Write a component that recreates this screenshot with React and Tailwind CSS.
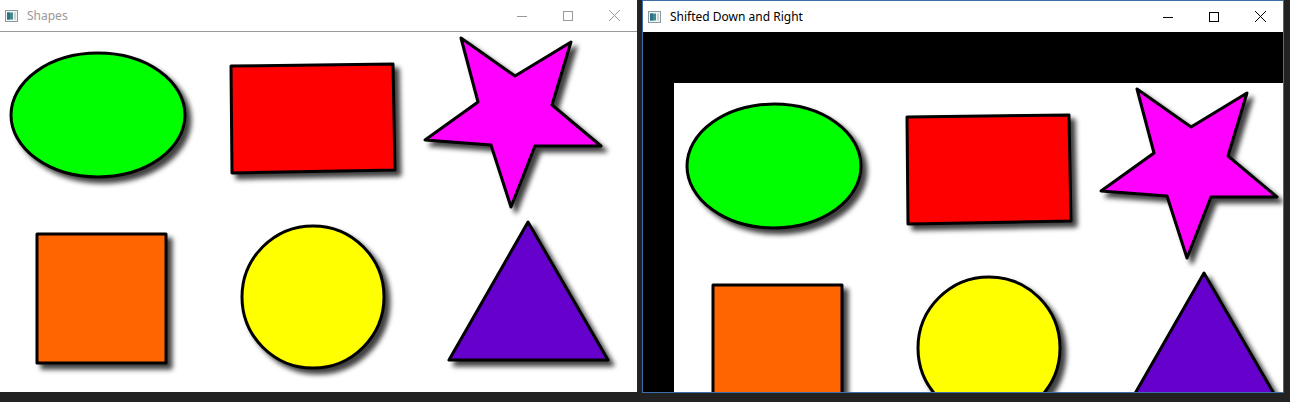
import { useId } from 'react';

const shapes = [
  { type: 'ellipse', props: { cx: 98, cy: 83, rx: 87, ry: 62 }, fill: '#00ff00' },
  { type: 'polygon', props: { points: '231,34 393,32 395,138 232,141' }, fill: '#ff0000' },
  {
    type: 'polygon',
    props: { points: '461,6 515,44 571,10 552,73 601,114 535,114 511,175 491,113 425,108 478,70' },
    fill: '#ff00ff',
  },
  { type: 'rect', props: { x: 37, y: 202, width: 129, height: 129 }, fill: '#ff6600' },
  { type: 'circle', props: { cx: 313, cy: 265, r: 71 }, fill: '#ffff00' },
  { type: 'polygon', props: { points: '528,190 449,328 608,328' }, fill: '#6600cc' },
];

const ShapesImage = () => {
  const id = useId().replace(/:/g, '');
  return (
    <svg width="640" height="360" viewBox="0 0 640 360" className="block bg-white">
      <defs>
        <filter id={`sh${id}`} x="-20%" y="-20%" width="140%" height="140%">
          <feDropShadow dx="5" dy="5" stdDeviation="2.5" floodColor="#000" floodOpacity="0.75" />
        </filter>
      </defs>
      <g filter={`url(#sh${id})`} stroke="#000" strokeWidth="3" strokeLinejoin="round">
        {shapes.map((s, i) => {
          const Tag = s.type;
          return <Tag key={i} {...s.props} fill={s.fill} />;
        })}
      </g>
    </svg>
  );
};

const AppIcon = () => (
  <svg width="13" height="12" viewBox="0 0 13 12">
    <rect x="0.5" y="0.5" width="12" height="11" fill="#f4f4f4" stroke="#8a9aa0" />
    <rect x="2" y="2.5" width="6" height="7" fill="#3f8f86" />
    <rect x="2" y="2.5" width="3" height="7" fill="#2f6f8f" />
    <rect x="9" y="2.5" width="2" height="7" fill="#c9d2d6" />
  </svg>
);

const Controls = ({ active }) => {
  const c = active ? '#000' : '#999';
  return (
    <div className="flex h-full items-center">
      <div className="flex h-full w-[46px] items-center justify-center">
        <svg width="10" height="10" viewBox="0 0 10 10">
          <line x1="0" y1="5.5" x2="10" y2="5.5" stroke={c} />
        </svg>
      </div>
      <div className="flex h-full w-[46px] items-center justify-center">
        <svg width="10" height="10" viewBox="0 0 10 10">
          <rect x="0.5" y="0.5" width="9" height="9" fill="none" stroke={c} />
        </svg>
      </div>
      <div className="flex h-full w-[46px] items-center justify-center">
        <svg width="11" height="11" viewBox="0 0 11 11">
          <path d="M0 0 L11 11 M11 0 L0 11" stroke={c} />
        </svg>
      </div>
    </div>
  );
};

const TitleBar = ({ title, active }) => (
  <div className="flex h-[31px] shrink-0 items-center justify-between bg-white">
    <div className="flex items-center gap-[9px] pl-[5px]">
      <AppIcon />
      <span
        className={`text-[12px] ${active ? 'text-black' : 'text-[#999]'}`}
        style={{ fontFamily: '"Noto Sans", "Open Sans", sans-serif' }}
      >
        {title}
      </span>
    </div>
    <Controls active={active} />
  </div>
);

export default function App() {
  return (
    <div className="flex h-[402px] w-[1290px] items-start gap-[5px] overflow-hidden bg-[#222222]">
      <div className="flex h-[392px] w-[637px] flex-col overflow-hidden bg-white">
        <TitleBar title="Shapes" />
        <div className="h-px bg-[#9a9a9a]" />
        <div className="flex-1 overflow-hidden">
          <ShapesImage />
        </div>
      </div>
      <div className="flex h-[393px] w-[642px] flex-col overflow-hidden border border-[#3c6fa8] bg-white">
        <TitleBar title="Shifted Down and Right" active />
        <div className="flex flex-1 flex-col overflow-hidden bg-black pl-[31px] pt-[51px]">
          <div className="flex-1 overflow-hidden bg-white pl-[2px]">
            <ShapesImage />
          </div>
        </div>
      </div>
    </div>
  );
}
